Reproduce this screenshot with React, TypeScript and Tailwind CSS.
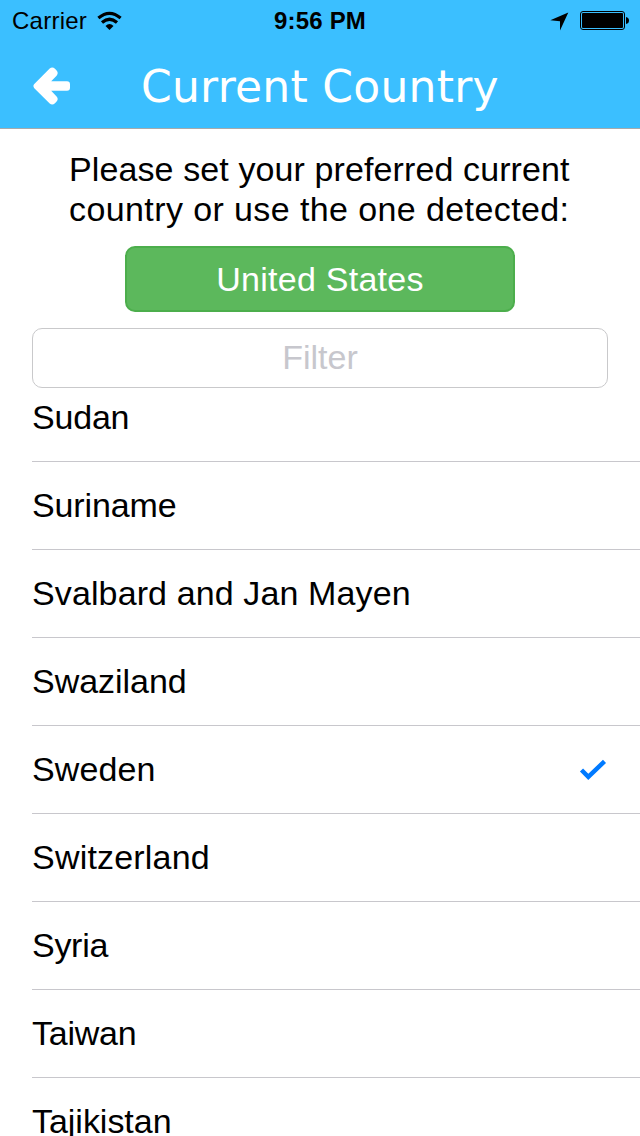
const rows = [
  { name: "Suriname", spacing: "tracking-[-0.13px]" },
  { name: "Svalbard and Jan Mayen", spacing: "tracking-[0.12px]" },
  { name: "Swaziland", spacing: "tracking-[-0.03px]" },
  { name: "Sweden", spacing: "tracking-[0.12px]", selected: true },
  { name: "Switzerland", spacing: "tracking-[0.2px]" },
  { name: "Syria", spacing: "tracking-[-0.28px]" },
  { name: "Taiwan", spacing: "tracking-[-0.25px]" },
  { name: "Tajikistan", spacing: "tracking-[-0.03px]" },
];

function StatusBar() {
  return (
    <div className="grid h-10 grid-cols-3 items-center text-black">
      <div className="flex items-center pl-3">
        <span className="pt-0.5 text-[24px] leading-7 tracking-[0.25px]">Carrier</span>
        <svg className="mt-px ml-[10px] h-[20px] w-[25px]" viewBox="0 0 25 20" fill="none" stroke="black" strokeWidth="3.2">
          <path d="M1.4 7 Q12.5 -2.4 23.6 7" />
          <path d="M5 11.5 Q12.5 5 20 11.5" />
          <path d="M8.5 15 Q12.5 11.2 16.5 15 L12.5 19 Z" fill="black" stroke="none" />
        </svg>
      </div>
      <span className="pt-0.5 text-center text-[24px] leading-7 font-bold tracking-[0.2px]">9:56 PM</span>
      <div className="flex items-center justify-end pt-0.5 pr-[11px]">
        <svg className="mr-[11px] h-[19px] w-[19px]" viewBox="0 0 19 19">
          <path d="M18.3 0.5 L0.3 8.3 L10 9.2 V18.5 Z" />
        </svg>
        <svg className="h-[20px] w-[49px]" viewBox="0 0 49 20">
          <rect x="0.5" y="0.5" width="44" height="18" rx="2.5" fill="none" stroke="black" />
          <rect x="2" y="2" width="41" height="15" rx="1" />
          <path d="M46 6 Q49 6.5 49 9.5 T46 13 Z" />
        </svg>
      </div>
    </div>
  );
}

export default function App() {
  return (
    <div className="flex h-[1136px] w-[640px] flex-col overflow-hidden bg-white font-['Liberation_Sans',sans-serif] text-[34px] text-black">
      <header className="h-[129px] shrink-0 border-b border-[#a7aaac] bg-[#3bbfff]">
        <StatusBar />
        <div className="flex h-[88px] items-center pl-[33px]">
          <svg className="mt-1 h-[40px] w-[38px] shrink-0" viewBox="0 0 38 40" fill="white">
            <path d="M1.3 17.9 L16.7 2.5 Q19.3 0.4 22 2.7 L23.6 4.5 Q25.8 7.1 23.6 9.7 L18.2 15.2 H34 Q37 15.2 37 18.5 V21.5 Q37 24.8 34 24.8 H18.2 L23.6 30.5 Q25.8 33.1 23.6 35.5 L22 37.3 Q19.3 39.6 16.7 37.5 L1.3 22.3 Q-0.5 20.1 1.3 17.9 Z" />
          </svg>
          <h1 className="ml-[70px] pt-1.5 font-['DejaVu_Sans',sans-serif] text-[44px] leading-[52px] tracking-[0.25px] whitespace-nowrap text-white">Current Country</h1>
        </div>
      </header>
      <main className="flex min-h-0 flex-1 flex-col">
        <p className="mt-5 pl-[69px] leading-10 whitespace-nowrap">
          <span className="block tracking-[0.11px]">Please set your preferred current</span>
          <span className="block tracking-[0.4px]">country or use the one detected:</span>
        </p>
        <button className="mt-[17px] ml-[125px] h-[66px] w-[390px] shrink-0 rounded-[10px] border-2 border-[#4cae4c] bg-[#5cb85c] tracking-[0.25px] text-white">United States</button>
        <input aria-label="Filter" placeholder="Filter" className="mx-8 mt-4 h-[60px] shrink-0 rounded-[10px] border border-[#c9c9cb] pb-0.5 text-center outline-none placeholder:text-[#c7c7cd]" />
        <ul className="pl-8">
          <li className="h-[74px] border-b border-[#c8c7cc] pt-[9px] leading-10 tracking-[-0.2px]">Sudan</li>
          {rows.map((row) => (
            <li key={row.name} className={`flex h-[88px] items-center justify-between border-b border-[#c8c7cc] pr-[33px] ${row.spacing}`}>
              <span>{row.name}</span>
              {row.selected && (
                <svg className="mt-px h-[22px] w-[28px]" viewBox="0 0 28 22" fill="none" stroke="#007aff" strokeWidth="4.4">
                  <path d="M2.5 11 L9.3 17.8 L25.5 2.3" />
                </svg>
              )}
            </li>
          ))}
        </ul>
      </main>
    </div>
  );
}
